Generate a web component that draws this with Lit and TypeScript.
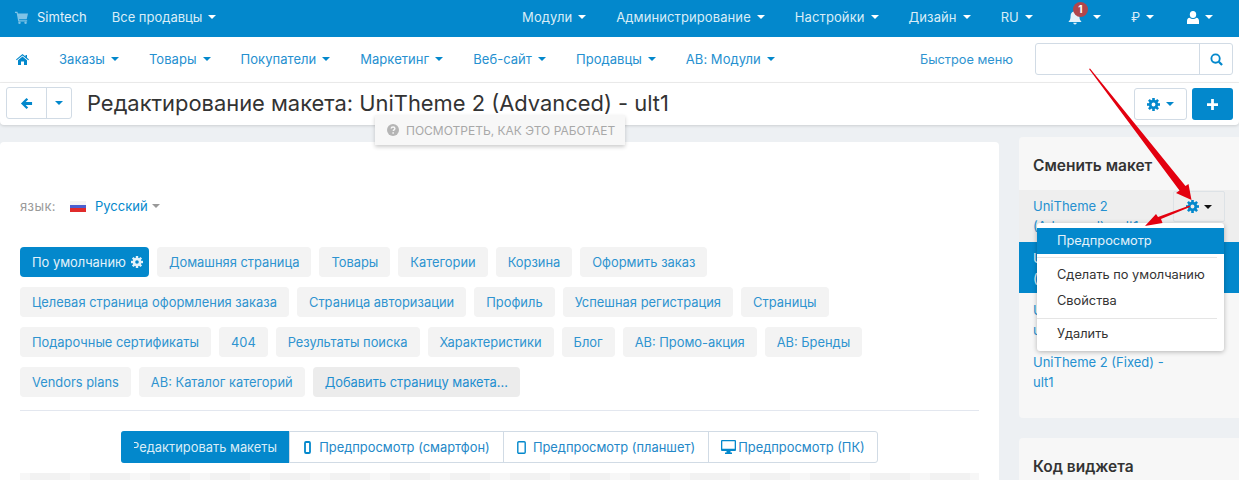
import { LitElement, html, css, svg } from "lit";
import { customElement } from "lit/decorators.js";

const gear = () => html`<svg class="ic" viewBox="-7 -7 14 14">
  <circle r="3.600" fill="none" stroke="currentColor" stroke-width="3"/>
  ${[0, 45, 90, 135, 180, 225, 270, 315].map((a) => svg`<rect x="-1.400" y="-7" width="2.800" height="3" fill="currentColor" transform="rotate(${a})"/>`)}
</svg>`;

const row1 = ["Заказы", "Товары", "Покупатели", "Маркетинг", "Веб-сайт", "Продавцы", "AB: Модули"];
const topRight = ["Модули", "Администрирование", "Настройки", "Дизайн", "RU"];
const tabRows = [
  ["Домашняя страница", "Товары", "Категории", "Корзина", "Оформить заказ"],
  ["Целевая страница оформления заказа", "Страница авторизации", "Профиль", "Успешная регистрация", "Страницы"],
  ["Подарочные сертификаты", "404", "Результаты поиска", "Характеристики", "Блог", "AB: Промо-акция", "AB: Бренды"],
  ["Vendors plans", "AB: Каталог категорий"],
];

@customElement("app-root")
export class AppRoot extends LitElement {
  static styles = css`
    :host { display: block; width: 1239px; height: 480px; overflow: hidden; position: relative; background: #edf0f3; font-family: Inter, "Liberation Sans", sans-serif; font-size: 13px; color: #333; }
    * { box-sizing: border-box; }
    .ic { width: 13px; height: 13px; display: block; flex: none; }
    .caret { width: 0; height: 0; border-left: 4px solid transparent; border-right: 4px solid transparent; border-top: 4px solid currentColor; display: inline-block; flex: none; }
    .topbar { height: 37px; background: #0388cc; color: #d9edf7; display: flex; align-items: center; padding: 0 26px 3px 15px; }
    .topbar .item { display: flex; align-items: center; gap: 6px; white-space: nowrap; }
    .topbar .caret { color: #fff; }
    .cart { width: 13px; height: 13px; color: #7fc3e6; margin-right: 9px; }
    .brand { color: #e4f2fa; margin-right: 25px; }
    .spacer { flex: 1; }
    .tr { display: flex; align-items: center; gap: 30px; letter-spacing: .1px; }
    .tr2 { display: flex; align-items: center; margin-left: 35px; }
    .bell { position: relative; width: 14px; height: 15px; color: #e4f2fa; margin-right: 11px; }
    .bell svg { width: 14px; height: 15px; display: block; }
    .badge { position: absolute; left: 5px; top: -8px; width: 15px; height: 15px; border-radius: 50%; background: #b0464c; color: #fff; font-size: 10px; font-weight: 700; display: flex; align-items: center; justify-content: center; }
    .bellcaret { margin-right: 30px; }
    .rub { margin-right: 33px; }
    .user { width: 12px; height: 13px; }
    .nav { height: 46px; background: #fff; border-bottom: 1px solid #eee; display: flex; align-items: center; padding: 0 6px 1px 16px; color: #2590d0; }
    .nav .home { width: 13px; height: 11px; margin-right: 30px; color: #0388cc; }
    .nav .list { display: flex; gap: 30px; letter-spacing: .04px; }
    .nav .item { display: flex; align-items: center; gap: 6px; white-space: nowrap; }
    .nav .caret { color: #0388cc; }
    .quick { margin-right: 22px; color: #2e93d0; font-size: 12.750px; }
    .search { width: 198px; height: 32px; border: 1px solid #d1dbe5; border-radius: 3px; display: flex; justify-content: flex-end; }
    .search span { width: 33px; border-left: 1px solid #d1dbe5; display: flex; align-items: center; justify-content: center; color: #0388cc; }
    .head { height: 42px; background: #fff; display: flex; align-items: center; padding: 0 6px; box-shadow: 0 1px 3px rgba(0,0,0,.14); border-radius: 0 0 4px 4px; position: relative; z-index: 1; }
    .bgroup { display: flex; width: 66px; height: 32px; margin-top: -2px; border: 1px solid #d1dbe5; border-radius: 3px; margin-right: 15px; color: #0388cc; }
    .bgroup span { display: flex; align-items: center; justify-content: center; }
    .bgroup .a { width: 40px; border-right: 1px solid #d1dbe5; }
    .bgroup .b { flex: 1; }
    h1 { margin: -2px 0 0; font-size: 21.900px; font-weight: 400; color: #333; white-space: nowrap; }
    .gbtn { width: 53px; height: 32px; border: 1px solid #d1dbe5; border-radius: 3px; display: flex; align-items: center; justify-content: center; gap: 6px; color: #0388cc; margin-right: 5px; }
    .plus { width: 41px; height: 32px; background: #0388cc; border-radius: 3px; color: #fff; display: flex; align-items: center; justify-content: center; }
    .plus .ic { width: 11px; height: 11px; }
    .howto { position: absolute; left: 375px; top: 115px; width: 250px; height: 30px; background: #f7f7f7; box-shadow: 0 2px 4px rgba(0,0,0,.2); color: #a8a8a8; font-size: 12px; display: flex; align-items: center; gap: 7px; padding-left: 12px; z-index: 2; white-space: nowrap; }
    .howto svg { width: 12px; height: 12px; }
    .body { display: grid; grid-template-columns: 999px 220px; gap: 20px; padding-top: 17px; }
    .card { background: #fff; border-radius: 4px; height: 400px; padding: 55px 20px 0; font-size: 12.880px; }
    .lang { display: flex; align-items: center; height: 18px; color: #0388cc; font-size: 13px; }
    .lang .lbl { color: #9a9a9a; text-transform: lowercase; letter-spacing: .4px; margin-right: 14px; }
    .flag { width: 16px; height: 11px; margin-right: 9px; background: linear-gradient(#f4f4f4 0 33%, #4a5fd0 33% 66%, #e02b2b 66%); }
    .lang .caret { color: #999; margin-left: 4px; }
    .tabs { margin-top: 32px; display: flex; flex-direction: column; gap: 10px; height: 163px; }
    .trow { display: flex; gap: 8px; }
    .trow:nth-child(2) { letter-spacing: .03px; }
    .tab { height: 30px; padding: 0 12px; background: #f3f3f3; border-radius: 4px; display: flex; align-items: center; gap: 5px; color: #2e93d0; white-space: nowrap; }
    .tab.on { background: #0388cc; color: #e4f2fa; padding-right: 6px; }
    .tab.add { background: #ececec; color: #1f8fd0; }
    .tab.on .ic { width: 12px; height: 12px; }
    hr { border: 0; border-top: 1px solid #e3e7ef; margin: 0; }
    .modes { margin: 20px auto 0; width: 757px; height: 32px; display: flex; border: 1px solid #d1dbe5; border-radius: 3px; color: #2488c8; }
    .modes span { display: flex; align-items: center; justify-content: center; gap: 7px; border-left: 1px solid #d1dbe5; white-space: nowrap; overflow: hidden; }
    .modes .on { background: #0388cc; color: #d9edf7; border: 0; margin: -1px 0 -1px -1px; width: 168px; border-radius: 3px 0 0 3px; justify-content: flex-end; padding-right: 12px; }
    .modes .on b { font-weight: 400; display: flex; justify-content: flex-end; width: 143px; overflow: hidden; }
    .modes svg { width: 9px; height: 13px; display: block; color: #0388cc; }
    .modes svg.pc { width: 15px; height: 14px; }
    .checker { margin-top: 10px; height: 10px; background: linear-gradient(90deg, #f2f2f2 0 40px, #f7f7f7 40px 60px); background-size: 60px 100%; background-position: 10px 0; }
    .side { display: flex; flex-direction: column; gap: 20px; margin-top: -5px; }
    .panel { width: 220px; background: #f7f7f7; border-radius: 4px 0 0 4px; height: 281px; }
    .panel h2 { margin: 0; font-size: 15.500px; line-height: 20px; font-weight: 600; color: #333; padding: 19px 14px 0; height: 53px; white-space: nowrap; }
    .panel .li { padding: 0 14px; color: #2590d0; line-height: 20px; font-size: 13px; }
    .li.cur { background: #eee; height: 52px; padding-top: 6px; position: relative; }
    .li.sel { background: #0388cc; color: #e4f2fa; height: 51px; padding-top: 6px; }
    .li.plain { height: 52px; padding-top: 7px; }
    .li.fx { padding-top: 7px; }
    .panel2 { height: 60px; }
    .gearbtn { position: absolute; left: 154px; top: 1px; width: 52px; height: 31px; border: 1px solid #dde2e6; border-radius: 2px; display: flex; align-items: center; justify-content: center; gap: 5px; color: #111; }
    .gearbtn .ic { color: #0388cc; }
    .menu { position: absolute; left: 1037px; top: 223px; width: 187px; height: 128px; background: #fff; border-radius: 3px; box-shadow: 0 1px 5px rgba(0,0,0,.28); padding-top: 5px; z-index: 3; font-size: 12.800px; color: #333; }
    .menu div { height: 26px; line-height: 26px; padding-left: 20px; white-space: nowrap; }
    .menu .on { background: #0388cc; color: #e4f2fa; }
    .menu hr { margin-right: 7px; border-top: 1px solid #e5e5e5; }
    .menu .h1 { margin-top: 3px; margin-bottom: 4px; }
    .menu .h2 { margin-top: 4px; margin-bottom: 2px; }
    .arrows { position: absolute; left: 0; top: 0; width: 1239px; height: 480px; z-index: 4; pointer-events: none; }
  `;

  render() {
    return html`
      <div class="topbar">
        <svg class="cart" viewBox="0 0 16 16"><path fill="currentColor" d="M0 1h3l.6 2H16l-1.600 7H5l.3 1.500h9.700V13H4L2 2.500H0Z"/><circle fill="currentColor" cx="5.500" cy="14.500" r="1.500"/><circle fill="currentColor" cx="13" cy="14.500" r="1.500"/></svg>
        <span class="brand">Simtech</span>
        <span class="item">Все продавцы <i class="caret"></i></span>
        <span class="spacer"></span>
        <div class="tr">${topRight.map((t) => html`<span class="item">${t} <i class="caret"></i></span>`)}</div>
        <div class="tr2">
          <span class="bell"><svg viewBox="0 0 16 16"><path fill="currentColor" d="M8 0a1.500 1.500 0 0 1 1.400 1.200C11.700 1.800 13 3.800 13 6c0 4 1 5.500 2.500 7h-15C2 11.500 3 10 3 6c0-2.200 1.300-4.200 3.600-4.800A1.500 1.500 0 0 1 8 0ZM6 14h4a2 2 0 0 1-4 0Z"/></svg><span class="badge">1</span></span>
          <i class="caret bellcaret"></i>
          <span class="item rub">₽ <i class="caret"></i></span>
          <span class="item"><svg class="ic user" viewBox="0 0 12 13"><ellipse fill="#fff" cx="6" cy="3.500" rx="3.200" ry="3.500"/><path fill="#fff" d="M0 13v-3c0-2 1-3 2.500-3.200C3.500 7.600 4.700 8 6 8s2.500-.4 3.500-1.200C11 7 12 8 12 10v3Z"/></svg><i class="caret"></i></span>
        </div>
      </div>
      <div class="nav">
        <svg class="home" viewBox="0 0 13 11"><path fill="currentColor" d="M6.500 0 9.500 2.500V1H11v2.800L13 5.500l-.7.800L6.500 1.500.7 6.300 0 5.500Zm0 2.500 4.500 3.700V11H8V7.500H5V11H2V6.200Z"/></svg>
        <div class="list">${row1.map((t) => html`<span class="item">${t} <i class="caret"></i></span>`)}</div>
        <span class="spacer"></span>
        <span class="quick">Быстрое меню</span>
        <div class="search"><span><svg class="ic" viewBox="0 0 14 14"><circle cx="6" cy="6" r="4.500" fill="none" stroke="currentColor" stroke-width="2"/><path d="M9.500 9.500 13 13" stroke="currentColor" stroke-width="2.400"/></svg></span></div>
      </div>
      <div class="head">
        <div class="bgroup">
          <span class="a"><svg class="ic" viewBox="0 0 14 14"><path fill="currentColor" d="M7 1 1 7l6 6 1.800-1.800L6.100 8.500H13v-3H6.100l2.700-2.700Z"/></svg></span>
          <span class="b"><i class="caret"></i></span>
        </div>
        <h1>Редактирование макета: UniTheme 2 (Advanced) - ult1</h1>
        <span class="spacer"></span>
        <div class="gbtn">${gear()}<i class="caret"></i></div>
        <div class="plus"><svg class="ic" viewBox="0 0 12 12"><path fill="currentColor" d="M4.500 0h3v4.500H12v3H7.500V12h-3V7.500H0v-3h4.500Z"/></svg></div>
      </div>
      <div class="howto"><svg viewBox="0 0 12 12"><circle cx="6" cy="6" r="6" fill="#b5b5b5"/><path d="M4.200 4.600c0-2.200 3.700-2.200 3.700 0 0 1.300-1.600 1.300-1.600 2.500" fill="none" stroke="#f7f7f7" stroke-width="1.400"/><rect x="5.400" y="8.200" width="1.500" height="1.500" fill="#f7f7f7"/></svg>ПОСМОТРЕТЬ, КАК ЭТО РАБОТАЕТ</div>
      <div class="body">
        <div class="card">
          <div class="lang"><span class="lbl">ЯЗЫК:</span><span class="flag"></span>Русский<i class="caret"></i></div>
          <div class="tabs">
            <div class="trow"><span class="tab on">По умолчанию ${gear()}</span>${tabRows[0].map((t) => html`<span class="tab">${t}</span>`)}</div>
            ${tabRows.slice(1, 3).map((r) => html`<div class="trow">${r.map((t) => html`<span class="tab">${t}</span>`)}</div>`)}
            <div class="trow">${tabRows[3].map((t) => html`<span class="tab">${t}</span>`)}<span class="tab add">Добавить страницу макета...</span></div>
          </div>
          <hr />
          <div class="modes">
            <span class="on"><b>Редактировать макеты</b></span>
            <span style="width:214px"><svg viewBox="0 0 9 13"><rect x="2" y="1" width="5" height="11" rx="1" fill="none" stroke="currentColor" stroke-width="1.800"/></svg>Предпросмотр (смартфон)</span>
            <span style="width:205px"><svg viewBox="0 0 9 13"><rect x=".8" y=".8" width="7.400" height="11.400" rx="1" fill="none" stroke="currentColor" stroke-width="1.400"/></svg>Предпросмотр (планшет)</span>
            <span style="flex:1;gap:2px"><svg class="pc" viewBox="0 0 15 14"><path fill="currentColor" d="M1 0h13a1 1 0 0 1 1 1v9a1 1 0 0 1-1 1H9.500v1.500H11V14H4v-1.500h1.500V11H1a1 1 0 0 1-1-1V1a1 1 0 0 1 1-1Zm.3 1.300v7.500h12.400V1.300Z"/></svg>Предпросмотр (ПК)</span>
          </div>
          <div class="checker"></div>
        </div>
        <div class="side">
          <div class="panel">
            <h2>Сменить макет</h2>
            <div class="li cur">UniTheme 2<br />(Advanced) - ult1<span class="gearbtn">${gear()}<i class="caret"></i></span></div>
            <div class="li sel">U<br />(</div>
            <div class="li plain">U<br />u</div>
            <div class="li fx">UniTheme 2 (Fixed) -<br />ult1</div>
          </div>
          <div class="panel panel2"><h2>Код виджета</h2></div>
        </div>
      </div>
      <div class="menu">
        <div class="on">Предпросмотр</div>
        <hr class="h1" />
        <div>Сделать по умолчанию</div>
        <div>Свойства</div>
        <hr class="h2" />
        <div>Удалить</div>
      </div>
      <svg class="arrows" viewBox="0 0 1239 480">
        ${svg`<path d="M1089 69 L1090 68.500 L1185.500 186 L1188.500 184 L1191.500 200 L1176 193 L1179.500 190.500 Z" fill="#e3000f"/>
        <path d="M1189.500 205.500 L1190 207 L1161 219 L1162.500 223 L1145 226 L1156 214 L1158 217 Z" fill="#e3000f"/>`}
      </svg>
    `;
  }
}
